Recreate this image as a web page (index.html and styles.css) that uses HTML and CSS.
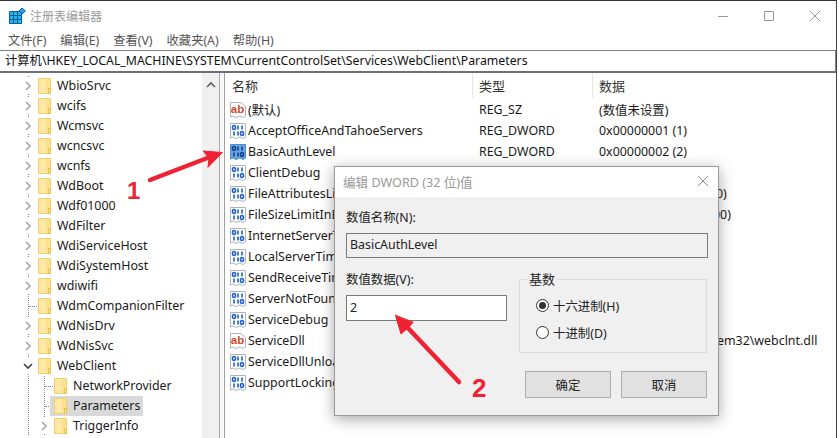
FILE: index.html
```html
<!DOCTYPE html>
<html lang="zh-CN">
<head>
<meta charset="utf-8">
<title>注册表编辑器</title>
<link rel="stylesheet" href="styles.css">
</head>
<body>
<svg class="defs" width="0" height="0" aria-hidden="true">
  <defs>
    <symbol id="folder" viewBox="0 0 14 17">
      <path d="M.5.5H12.500V15.500H.5Z" fill="#ffe08f" stroke="#f0cf70"/>
      <path d="M1 1H8V15H1Z" fill="#ffe7a6"/>
      <path d="M10.500 10.500H12.500V15.500H10.500Z" fill="#ffedb8" stroke="#eabc45"/>
    </symbol>
    <symbol id="chev" viewBox="0 0 10 10">
      <path d="M3 1 7 5 3 9" fill="none" stroke="#a6a6a6" stroke-width="1.600"/>
    </symbol>
    <symbol id="chevd" viewBox="0 0 10 10">
      <path d="M1 3 5 7 9 3" fill="none" stroke="#404040" stroke-width="1.600"/>
    </symbol>
    <symbol id="bin" viewBox="0 0 16 16">
      <path d="M.5.500H15.500V14L13 15.500 10 14 6 15.500 3 14 .5 15Z" fill="#fff" stroke="#b0b4ba"/>
      <g fill="none" stroke="#1f5fc8" stroke-width="1.600">
        <ellipse cx="4" cy="4.500" rx="1.500" ry="2"/>
        <path d="M8 2.500V6.500M12 2.500V6.500"/>
        <path d="M4 8.500V12.500M8 8.500V12.500"/>
        <ellipse cx="12" cy="10.500" rx="1.500" ry="2"/>
      </g>
    </symbol>
    <symbol id="binsel" viewBox="0 0 16 16">
      <path d="M.5.500H15.500V14L13 15.500 10 14 6 15.500 3 14 .5 15Z" fill="#6aa5e0" stroke="#4b8dd0"/>
      <g fill="none" stroke="#123f96" stroke-width="1.600">
        <ellipse cx="4" cy="4.500" rx="1.500" ry="2"/>
        <path d="M8 2.500V6.500M12 2.500V6.500"/>
        <path d="M4 8.500V12.500M8 8.500V12.500"/>
        <ellipse cx="12" cy="10.500" rx="1.500" ry="2"/>
      </g>
    </symbol>
    <symbol id="str" viewBox="0 0 16 16">
      <path d="M.5.500H11L15.500 4.500V14L13 15.500 10 14 6 15.500 3 14 .5 15Z" fill="#fff" stroke="#b0b4ba"/>
      <text x=".8" y="11" font-family="Liberation Sans" font-weight="700" font-size="11.500" fill="#d5482a">ab</text>
    </symbol>
  </defs>
</svg>

<div class="window">
  <header class="titlebar">
    <svg class="appicon" width="17" height="16" viewBox="0 0 17 16">
      <g fill="#22b5f4" stroke="#0d5f92" stroke-width="1">
        <path d="M.5 3.500H4.500V7.500H.5ZM4.500 3.500H8.500V7.500H4.500ZM8.500 3.500H12.500V7.500H8.500Z"/>
        <path d="M.5 7.500H4.500V11.500H.5ZM4.500 7.500H8.500V11.500H4.500ZM8.500 7.500H12.500V11.500H8.500Z"/>
        <path d="M.5 11.500H4.500V15.500H.5ZM4.500 11.500H8.500V15.500H4.500ZM8.500 11.500H12.500V15.500H8.500Z"/>
      </g>
      <path d="M13 0 16.500 3 13 6 10 3Z" fill="#22a5e4" stroke="#0d5f92"/>
    </svg>
    <span class="apptitle">注册表编辑器</span>
    <div class="caption">
      <svg width="46" height="30" viewBox="0 0 46 30"><path d="M18 15.500H28" stroke="#999"/></svg>
      <svg width="46" height="30" viewBox="0 0 46 30"><path d="M18.500 10.500H27.500V19.500H18.500Z" fill="none" stroke="#999"/></svg>
      <svg width="46" height="30" viewBox="0 0 46 30"><path d="M18 10 28 20M28 10 18 20" stroke="#999"/></svg>
    </div>
  </header>
  <nav class="menubar">
    <span>文件(F)</span><span>编辑(E)</span><span>查看(V)</span><span>收藏夹(A)</span><span>帮助(H)</span>
  </nav>
  <div class="address">计算机\HKEY_LOCAL_MACHINE\SYSTEM\CurrentControlSet\Services\WebClient\Parameters</div>
  <main class="panes">
    <section class="tree">
      <ul class="treelist">
        <li class="node"><svg class="tw"><use href="#chev"/></svg><svg class="fo"><use href="#folder"/></svg><span>WbioSrvc</span></li>
        <li class="node"><svg class="tw"><use href="#chev"/></svg><svg class="fo"><use href="#folder"/></svg><span>wcifs</span></li>
        <li class="node"><svg class="tw"><use href="#chev"/></svg><svg class="fo"><use href="#folder"/></svg><span>Wcmsvc</span></li>
        <li class="node"><svg class="tw"><use href="#chev"/></svg><svg class="fo"><use href="#folder"/></svg><span>wcncsvc</span></li>
        <li class="node"><svg class="tw"><use href="#chev"/></svg><svg class="fo"><use href="#folder"/></svg><span>wcnfs</span></li>
        <li class="node"><svg class="tw"><use href="#chev"/></svg><svg class="fo"><use href="#folder"/></svg><span>WdBoot</span></li>
        <li class="node"><svg class="tw"><use href="#chev"/></svg><svg class="fo"><use href="#folder"/></svg><span>Wdf01000</span></li>
        <li class="node"><svg class="tw"><use href="#chev"/></svg><svg class="fo"><use href="#folder"/></svg><span>WdFilter</span></li>
        <li class="node"><svg class="tw"><use href="#chev"/></svg><svg class="fo"><use href="#folder"/></svg><span>WdiServiceHost</span></li>
        <li class="node"><svg class="tw"><use href="#chev"/></svg><svg class="fo"><use href="#folder"/></svg><span>WdiSystemHost</span></li>
        <li class="node"><svg class="tw"><use href="#chev"/></svg><svg class="fo"><use href="#folder"/></svg><span>wdiwifi</span></li>
        <li class="node leaf"><span class="tw"></span><svg class="fo"><use href="#folder"/></svg><span>WdmCompanionFilter</span></li>
        <li class="node"><svg class="tw"><use href="#chev"/></svg><svg class="fo"><use href="#folder"/></svg><span>WdNisDrv</span></li>
        <li class="node"><svg class="tw"><use href="#chev"/></svg><svg class="fo"><use href="#folder"/></svg><span>WdNisSvc</span></li>
        <li class="node"><svg class="tw"><use href="#chevd"/></svg><svg class="fo"><use href="#folder"/></svg><span>WebClient</span></li>
        <li class="node child leaf"><span class="tw"></span><svg class="fo"><use href="#folder"/></svg><span>NetworkProvider</span></li>
        <li class="node child leaf sel"><span class="tw"></span><svg class="fo"><use href="#folder"/></svg><span class="lab">Parameters</span></li>
        <li class="node child"><svg class="tw"><use href="#chev"/></svg><svg class="fo"><use href="#folder"/></svg><span>TriggerInfo</span></li>
      </ul>
      <div class="vscroll">
        <svg width="10" height="10" viewBox="0 0 10 10"><path d="M1 7 5 3 9 7" fill="none" stroke="#606060" stroke-width="1.600"/></svg>
      </div>
    </section>
    <section class="list">
      <div class="lhead"><span class="c1">名称</span><span class="c2">类型</span><span class="c3">数据</span></div>
      <div class="row"><span class="c1"><svg class="ri"><use href="#str"/></svg>(默认)</span><span class="c2">REG_SZ</span><span class="c3">(数值未设置)</span></div>
      <div class="row"><span class="c1"><svg class="ri"><use href="#bin"/></svg>AcceptOfficeAndTahoeServers</span><span class="c2">REG_DWORD</span><span class="c3">0x00000001 (1)</span></div>
      <div class="row"><span class="c1"><svg class="ri"><use href="#binsel"/></svg>BasicAuthLevel</span><span class="c2">REG_DWORD</span><span class="c3">0x00000002 (2)</span></div>
      <div class="row"><span class="c1"><svg class="ri"><use href="#bin"/></svg>ClientDebug</span></div>
      <div class="row"><span class="c1 cut"><svg class="ri"><use href="#bin"/></svg>FileAttributesLimitInBytes</span><span class="c2 pad"></span><span class="c3">0x000f4240 (1000000)</span></div>
      <div class="row"><span class="c1 cut"><svg class="ri"><use href="#bin"/></svg>FileSizeLimitInBytes</span><span class="c2 pad"></span><span class="c3">0x02faf080 (50000000)</span></div>
      <div class="row"><span class="c1 cut"><svg class="ri"><use href="#bin"/></svg>InternetServerTimeout</span></div>
      <div class="row"><span class="c1 cut"><svg class="ri"><use href="#bin"/></svg>LocalServerTimeout</span></div>
      <div class="row"><span class="c1 cut"><svg class="ri"><use href="#bin"/></svg>SendReceiveTimeout</span></div>
      <div class="row"><span class="c1 cut"><svg class="ri"><use href="#bin"/></svg>ServerNotFoundCache</span></div>
      <div class="row"><span class="c1"><svg class="ri"><use href="#bin"/></svg>ServiceDebug</span></div>
      <div class="row"><span class="c1 cut"><svg class="ri"><use href="#str"/></svg>ServiceDll</span><span class="c2 pad"></span><span class="c3">%SystemRoot%\System32\webclnt.dll</span></div>
      <div class="row"><span class="c1 cut"><svg class="ri"><use href="#bin"/></svg>ServiceDllUnloadOnStop</span></div>
      <div class="row"><span class="c1 cut"><svg class="ri"><use href="#bin"/></svg>SupportLockingWebDAV</span></div>
    </section>
  </main>

  <div class="dialog">
    <div class="dtitle"><span>编辑 DWORD (32 位)值</span>
      <svg width="12" height="12" viewBox="0 0 12 12"><path d="M1 1 11 11M11 1 1 11" stroke="#8a8a8a"/></svg>
    </div>
    <div class="dbody">
      <label class="dlabel">数值名称(N):</label>
      <div class="field ro">BasicAuthLevel</div>
      <div class="dcols">
        <div class="dleft">
          <label class="dlabel">数值数据(V):</label>
          <div class="field val">2</div>
        </div>
        <fieldset class="base">
          <legend>基数</legend>
          <div class="radio on"><i></i>十六进制(H)</div>
          <div class="radio"><i></i>十进制(D)</div>
        </fieldset>
      </div>
      <div class="btns"><button class="btn">确定</button><button class="btn">取消</button></div>
    </div>
  </div>

  <svg class="marks" width="839" height="438" viewBox="0 0 839 438" aria-hidden="true">
    <g fill="#ee2233" stroke="#ee2233" stroke-linejoin="round" stroke-linecap="round">
      <path d="M150 180 210 157" fill="none" stroke-width="4.500"/>
      <path d="M222 152.500 203 151 209 158 208 167Z" stroke-width="1"/>
      <path d="M459 382 408 328" fill="none" stroke-width="4.500"/>
      <path d="M395.500 315.500 401 334 408 328 413 322.500Z" stroke-width="1"/>
    </g>
  </svg>
  <span class="num n1">1</span>
  <span class="num n2">2</span>
</div>
</body>
</html>
```
FILE: styles.css
```css
* { box-sizing: border-box; }
html, body { margin: 0; padding: 0; background: #fff; }
body { width: 839px; height: 438px; overflow: hidden; font-family: "Noto Sans", "Noto Sans CJK SC", sans-serif; font-size: 12.400px; color: #1a1a1a; }
.defs { position: absolute; }
.window { position: relative; width: 837px; height: 438px; border-top: 1px solid #333; border-right: 1px solid #444; overflow: hidden; display: flex; flex-direction: column; background: #fff; }
.titlebar { height: 29px; display: flex; align-items: center; padding-left: 9px; flex: none; }
.appicon { margin-right: 4px; }
.apptitle { color: #9a9a9a; font-size: 12px; }
.caption { margin-left: auto; display: flex; margin-right: -2px; }
.menubar { height: 20px; display: flex; gap: 14px; align-items: center; padding-left: 8px; flex: none; color: #555; font-size: 12.300px; }
.address { height: 23px; flex: none; border: 1px solid #808080; border-bottom: 2px solid #6e6e78; border-left: 0; padding-left: 5px; line-height: 20px; color: #111; font-size: 12.300px; white-space: nowrap; overflow: hidden; }
.panes { flex: 1; display: flex; min-height: 0; background: #f8f8f8; }
.tree { width: 220px; background: #fff; display: flex; flex: none; border-right: 1px solid #a8a8a8; overflow: hidden; }
.treelist { list-style: none; margin: 0; padding: 3px 0 0 0; flex: 1; min-width: 0; }
.node { height: 20px; display: flex; align-items: center; padding-left: 23px; white-space: nowrap; color: #1a1a1a; position: relative; background: repeating-linear-gradient(to bottom, #888 0 1px, transparent 1px 2px) 28px 0 / 1px 100% no-repeat; }
.node > span:last-child { margin-bottom: 2px; }
.tw { width: 10px; height: 16px; margin-right: 5px; flex: none; display: block; background: #fff; }
.leaf > .tw { background: transparent; }
.fo { width: 14px; height: 17px; margin-right: 5px; flex: none; }
.node.child { padding-left: 39px; background: repeating-linear-gradient(to bottom, #888 0 1px, transparent 1px 2px) 28px 0 / 1px 100% no-repeat, repeating-linear-gradient(to bottom, #888 0 1px, transparent 1px 2px) 44px 0 / 1px 100% no-repeat; }
.leaf::before { content: ""; position: absolute; left: 29px; top: 10px; width: 8px; border-top: 1px dotted #888; }
.child.leaf::before { left: 45px; }
.sel .lab { position: relative; z-index: 1; }
.sel::after { content: ""; position: absolute; left: 50px; top: 0; width: 93px; height: 20px; background: #d9d9d9; }
.sel .fo { position: relative; z-index: 1; }
.vscroll { width: 17px; flex: none; background: #f0f0f0; display: flex; justify-content: center; padding-top: 7px; }
.list { flex: 1; margin-left: 4px; background: #fff; border-left: 1px solid #a0a0a0; min-width: 0; overflow: hidden; }
.lhead { height: 26px; display: flex; align-items: flex-start; color: #333; font-size: 13px; }
.lhead .c1 { width: 248px; padding-left: 7px; border-right: 1px solid #e5e5e5; height: 25px; line-height: 27px; }
.lhead .c2 { width: 120px; padding-left: 6px; border-right: 1px solid #e5e5e5; height: 25px; line-height: 27px; }
.lhead .c3 { padding-left: 6px; line-height: 27px; }
.row { height: 21px; display: flex; align-items: center; white-space: nowrap; color: #1a1a1a; }
.row .c1 { width: 248px; padding-left: 5px; display: flex; align-items: center; gap: 2px; flex: none; }
.row .c1.cut { width: 109px; overflow: hidden; }
.row .c2 { width: 120px; padding-left: 6px; flex: none; }
.row .c2.pad { width: 259px; }
.row .c3 { padding-left: 6px; flex: none; }
.ri { width: 16px; height: 16px; flex: none; }
.dialog { position: absolute; left: 334px; top: 165px; width: 385px; height: 250px; border: 1px solid #9a9a9a; background: #f0f0f0; box-shadow: 0 3px 14px rgba(0, 0, 0, .35); display: flex; flex-direction: column; z-index: 2; }
.dtitle { height: 30px; background: #fff; display: flex; align-items: center; justify-content: space-between; padding: 0 9px 2px 8px; color: #9a9a9a; flex: none; font-size: 12.600px; }
.dbody { flex: 1; padding: 12px 11px 0 11px; display: flex; flex-direction: column; }
.dlabel { display: block; height: 18px; line-height: 18px; color: #222; }
.field { border: 1px solid #7a7a7a; padding-left: 3px; color: #222; }
.ro { height: 25px; margin-top: 6px; line-height: 22px; background: #f0f0f0; width: 362px; }
.dcols { display: flex; margin-top: 13px; gap: 12px; }
.dleft { width: 161px; flex: none; }
.val { height: 26px; margin-top: 6px; line-height: 23px; background: #fff; }
.base { margin: 0; padding: 5px 0 0 16px; width: 189px; height: 82px; border: 1px solid #dcdcdc; }
.base legend { padding: 0 2px; margin-left: -9px; color: #222; line-height: 16px; font-size: 13px; }
.radio { height: 27px; display: flex; align-items: center; gap: 4px; color: #222; }
.radio i { width: 13px; height: 13px; border: 1px solid #333; border-radius: 50%; background: #fff; display: block; flex: none; position: relative; }
.radio.on i::after { content: ""; position: absolute; left: 2px; top: 2px; width: 7px; height: 7px; border-radius: 50%; background: #333; }
.btns { display: flex; gap: 10px; justify-content: flex-end; margin-top: 18px; }
.btn { width: 86px; height: 27px; background: #e1e1e1; border: 1px solid #adadad; font: inherit; color: #222; padding: 0; }
.marks { position: absolute; left: 0; top: -1px; z-index: 3; pointer-events: none; }
.num { position: absolute; z-index: 3; font-family: "Liberation Sans", sans-serif; font-weight: 700; font-size: 24px; color: #ee2233; line-height: 24px; }
.n1 { left: 127px; top: 178px; }
.n2 { left: 472px; top: 375px; font-size: 26px; }
```
